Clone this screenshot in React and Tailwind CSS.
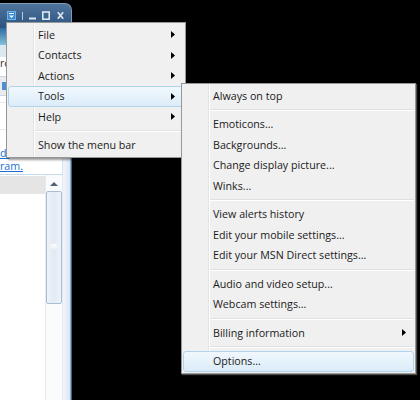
import React from 'react';

const mainItems = [
  { label: 'File', sub: true },
  { label: 'Contacts', sub: true },
  { label: 'Actions', sub: true },
  { label: 'Tools', sub: true, active: true },
  { label: 'Help', sub: true },
  { sep: true },
  { label: 'Show the menu bar' },
];

const toolItems = [
  { label: 'Always on top' },
  { sep: true },
  { label: 'Emoticons...' },
  { label: 'Backgrounds...' },
  { label: 'Change display picture...' },
  { label: 'Winks...' },
  { sep: true },
  { label: 'View alerts history' },
  { label: 'Edit your mobile settings...' },
  { label: 'Edit your MSN Direct settings...' },
  { sep: true },
  { label: 'Audio and video setup...' },
  { label: 'Webcam settings...' },
  { sep: true },
  { label: 'Billing information', sub: true },
  { sep: true },
  { label: 'Options...', active: true },
];

function Arrow() {
  return (
    <svg width="4" height="7" viewBox="0 0 4 7" className="shrink-0">
      <path d="M0 0L4 3.5L0 7Z" fill="#000" />
    </svg>
  );
}

function MenuList({ items, arrowPad }) {
  return (
    <div className="px-[1px] py-[1.5px] bg-[linear-gradient(to_right,transparent_26px,#e2e3e3_26px,#e2e3e3_27px,#ffffff_27px,#ffffff_28px,transparent_28px)]">
      {items.map((it, i) =>
        it.sep ? (
          <div key={i} className="h-[8px] flex items-center pl-[27px]">
            <div className="h-[2px] flex-1 border-t border-b border-t-[#e0e0e0] border-b-white" />
          </div>
        ) : (
          <div
            key={i}
            className={
              'h-[20.5px] flex items-center pl-[29px] rounded-[3px] border ' +
              arrowPad +
              (it.active
                ? ' border-[#aed4ee] bg-gradient-to-b from-[#f1f8fd] to-[#dbecf9]'
                : ' border-transparent')
            }
          >
            <span className="flex-1 whitespace-nowrap text-[#1b1b1b]">{it.label}</span>
            {it.sub && <Arrow />}
          </div>
        )
      )}
    </div>
  );
}

function TitleButtons() {
  return (
    <div className="flex items-center justify-end pr-[7px] pt-[7px]">
      <svg width="9" height="9" viewBox="0 0 9 9">
        <rect x="0.5" y="0.5" width="8" height="8" fill="#3a88d0" stroke="#6fb2ea" />
        <path d="M2 2.5H7" stroke="#fff" strokeWidth="1" />
        <path d="M2 4.5H7L4.5 7Z" fill="#fff" />
      </svg>
      <div className="ml-[6px] w-[1px] h-[8px] bg-[#b9c9da]" />
      <svg width="7" height="9" viewBox="0 0 7 9" className="ml-[6px]">
        <rect x="0" y="6.5" width="7" height="2" fill="#dde6ef" />
      </svg>
      <svg width="8" height="9" viewBox="0 0 8 9" className="ml-[6px]">
        <rect x="0.8" y="1" width="6.4" height="7.2" fill="none" stroke="#dde6ef" strokeWidth="1.6" />
      </svg>
      <svg width="7" height="9" viewBox="0 0 7 9" className="ml-[7px]">
        <path d="M0.8 1.2L6.2 7.8M6.2 1.2L0.8 7.8" stroke="#dde6ef" strokeWidth="1.7" />
      </svg>
    </div>
  );
}

function MessengerWindow() {
  return (
    <div className="w-[72px] h-full flex flex-col pt-[3px]">
      <div className="h-[25px] rounded-tr-[7px] border-t border-r border-[#7f9bb8] bg-gradient-to-b from-[#4f759c] to-[#2c5380]">
        <TitleButtons />
      </div>
      <div className="flex-1 flex border-r border-[#3f6589]">
        <div className="flex-1 flex flex-col">
          <div className="h-[17px] bg-gradient-to-b from-[#2f6ba0] to-[#86c2da]" />
          <div className="h-[12px] bg-[#dce9f1]" />
          <div className="h-[19px] bg-white flex items-start pt-[1px] text-[#333] leading-none">re</div>
          <div className="h-[20px] bg-[#e8ecf0] border-t border-b border-[#cfd8e0] flex items-center pl-[2px]">
            <div className="w-[4px] h-[8px] bg-[#4b8fd0]" />
          </div>
          <div className="h-[52px] bg-white flex flex-col">
            <div className="h-[7px] border-b border-[#e6eaee]" />
            <div className="h-[27px] border-b border-[#e6eaee]" />
          </div>
          <div className="h-[26px] bg-white flex flex-col justify-end pb-[1px] leading-[13px] text-[#1c6fd1] underline border-r border-[#d6e4ef]">
            <span>d.</span>
            <span>ram.</span>
          </div>
          <div className="flex-1 flex border-t border-[#c8dbea]">
            <div className="flex-1 flex flex-col bg-white">
              <div className="h-[18px] mt-[1px] bg-[#e5e5e5]" />
            </div>
            <div className="w-[18px] bg-[#fafbfc] border-l border-r border-[#e4ebf2] flex flex-col items-center pt-[7px]">
              <svg width="8" height="4" viewBox="0 0 8 4">
                <path d="M0 4L4 0L8 4Z" fill="#50617a" />
              </svg>
              <div className="mt-[5px] w-[16px] h-[113px] rounded-[2px] border border-[#a9bdd3] bg-gradient-to-r from-[#eef3f9] via-[#e2eaf4] to-[#eef3f9] flex items-center justify-center">
                <div className="w-[8px] h-[8px] rounded-full bg-gradient-to-b from-white to-[#dde6f0]" />
              </div>
            </div>
          </div>
        </div>
        <div className="w-[8px] bg-gradient-to-r from-[#f0f5fa] to-[#dbe7f2] border-r border-[#8ea9c4]" />
      </div>
    </div>
  );
}

export default function App() {
  return (
    <div className="relative w-[420px] h-[400px] overflow-hidden bg-black flex font-['Open_Sans','Noto_Sans',sans-serif] text-[10.7px]">
      <MessengerWindow />

      <div className="absolute left-[6px] top-[22px] w-[180px] bg-[#f0f0f0] border border-[#979797] shadow-[2px_2px_2px_rgba(0,0,0,0.4)]">
        <MenuList items={mainItems} arrowPad="pr-[8px]" />
      </div>

      <div className="absolute left-[181px] top-[83px] w-[235px] bg-[#f0f0f0] border border-[#979797] shadow-[1px_1px_1px_rgba(110,110,110,0.7)]">
        <MenuList items={toolItems} arrowPad="pr-[7px]" />
      </div>
    </div>
  );
}
